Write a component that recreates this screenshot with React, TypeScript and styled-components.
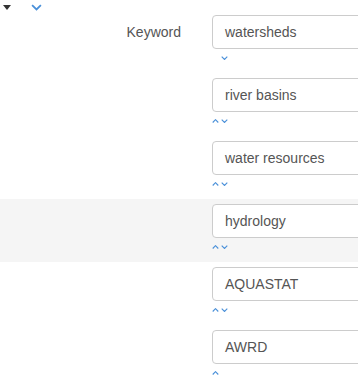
import * as React from 'react'
import styled, { createGlobalStyle } from 'styled-components'

const LABEL_WIDTH = 181
const GAP = 31
const ROW_HEIGHT = 63
const BLUE = '#4a90d9'

const GlobalStyle = createGlobalStyle`
  html, body {
    margin: 0;
    padding: 0;
    background: #fff;
    overflow: hidden;
  }
  body {
    font-family: 'Liberation Sans', Arial, sans-serif;
    font-size: 14px;
    color: #555;
  }
`

const Page = styled.div`
  width: 358px;
  height: 386px;
  overflow: hidden;
`

const Header = styled.div`
  height: 10px;
  display: flex;
  align-items: flex-start;
  gap: 20px;
  padding-left: 3px;
  padding-top: 4px;
  box-sizing: border-box;
`

const Caret = styled.div`
  width: 0;
  height: 0;
  border-left: 4px solid transparent;
  border-right: 4px solid transparent;
  border-top: 5px solid #333;
  margin-top: 1px;
`

const Row = styled.div<{ $active?: boolean }>`
  display: grid;
  grid-template-columns: ${LABEL_WIDTH}px 1fr;
  column-gap: ${GAP}px;
  height: ${ROW_HEIGHT}px;
  padding-top: 5px;
  box-sizing: border-box;
  background: ${props => (props.$active ? '#f5f5f5' : 'transparent')};
`

const Label = styled.div`
  text-align: right;
  padding-top: 7px;
  line-height: 20px;
  color: #555;
`

const Field = styled.div`
  display: flex;
  flex-direction: column;
`

const Input = styled.div`
  width: 200px;
  height: 34px;
  box-sizing: border-box;
  border: 1px solid #ccc;
  border-radius: 4px;
  background: #fff;
  padding: 0 12px;
  line-height: 32px;
  color: #555;
  white-space: nowrap;
`

const Arrows = styled.div`
  display: flex;
  gap: 2px;
  margin-top: 7px;
  height: 8px;
`

const ArrowSlot = styled.div`
  width: 7px;
  height: 5px;
  display: flex;
`

const Chevron = ({ up, size = 7 }: { up?: boolean; size?: number }) => (
  <svg width={size} height={size * 0.6} viewBox="0 0 10 6" style={{ display: 'block' }}>
    <path
      d={up ? 'M1 5 L5 1 L9 5' : 'M1 1 L5 5 L9 1'}
      fill="none"
      stroke={BLUE}
      strokeWidth={1.6}
    />
  </svg>
)

const keywords = ['watersheds', 'river basins', 'water resources', 'hydrology', 'AQUASTAT', 'AWRD']

const App = () => (
  <Page>
    <GlobalStyle />
    <Header>
      <Caret />
      <Chevron size={11} />
    </Header>
    {keywords.map((kw, i) => (
      <Row key={kw} $active={i === 3}>
        <Label>{i === 0 ? 'Keyword' : ''}</Label>
        <Field>
          <Input>{kw}</Input>
          <Arrows>
            <ArrowSlot>{i > 0 && <Chevron up />}</ArrowSlot>
            <ArrowSlot>{i < keywords.length - 1 && <Chevron />}</ArrowSlot>
          </Arrows>
        </Field>
      </Row>
    ))}
  </Page>
)

export default App
